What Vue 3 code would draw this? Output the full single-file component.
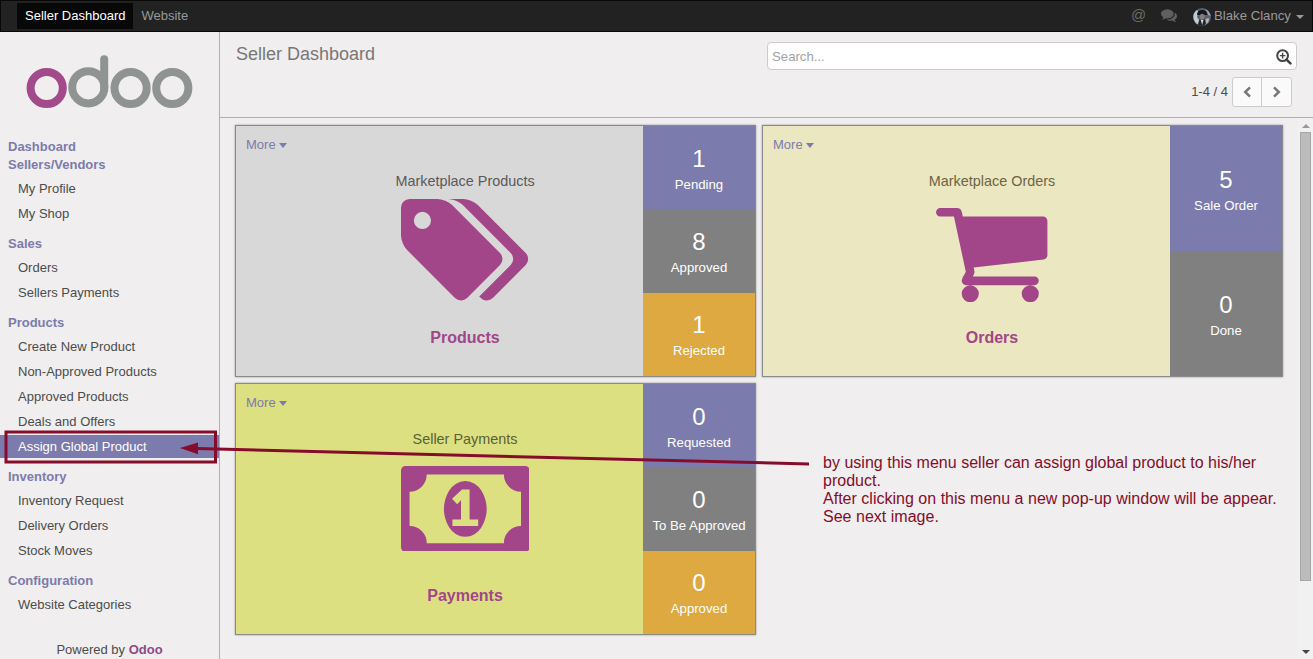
<script setup>
const menu = [
  { title: 'Dashboard', items: [] },
  { title: 'Sellers/Vendors', items: ['My Profile', 'My Shop'] },
  { title: 'Sales', items: ['Orders', 'Sellers Payments'] },
  {
    title: 'Products',
    items: ['Create New Product', 'Non-Approved Products', 'Approved Products', 'Deals and Offers', 'Assign Global Product'],
  },
  { title: 'Inventory', items: ['Inventory Request', 'Delivery Orders', 'Stock Moves'] },
  { title: 'Configuration', items: ['Website Categories'] },
]
const active = 'Assign Global Product'

const icons = {
  tags: {
    box: '0 128 1920 1536', w: 128.6, h: 102.9,
    d: 'M448 448q0-53-37.5-90.5t-90.5-37.5-90.5 37.5-37.5 90.5 37.5 90.5 90.5 37.5 90.5-37.5 37.5-90.5zm1067 576q0 53-37 90l-491 492q-39 37-91 37-53 0-90-37l-715-716q-38-37-64.5-101t-26.5-117v-416q0-52 38-90t90-38h416q53 0 117 26.5t102 64.5l715 714q37 39 37 91zm384 0q0 53-37 90l-491 492q-39 37-91 37-36 0-59-14t-53-45l470-470q37-37 37-90 0-52-37-91l-715-714q-38-38-102-64.5t-117-26.5h224q53 0 117 26.5t102 64.5l715 714q37 39 37 91z',
  },
  cart: {
    box: '64 256 1664 1408', w: 111.4, h: 94.3,
    d: 'M704 1536q0 52-38 90t-90 38-90-38-38-90 38-90 90-38 90 38 38 90zm896 0q0 52-38 90t-90 38-90-38-38-90 38-90 90-38 90 38 38 90zm128-1088v512q0 24-16.5 42.5t-40.5 21.5l-1044 122q13 60 13 70 0 16-24 64h920q26 0 45 19t19 45-19 45-45 19h-1024q-26 0-45-19t-19-45q0-11 8-31.5t16-36 21.5-40 15.5-29.5l-177-823h-204q-26 0-45-19t-19-45 19-45 45-19h256q16 0 28.5 6.5t19.5 15.5 13 24.5 8 26 5.5 29.5 4.5 26h1201q26 0 45 19t19 45z',
  },
  money: {
    box: '0 0 1920 1280', w: 128.6, h: 85.8,
    d: 'M768 896h384v-96h-128v-448h-114l-148 137 77 80q42-37 55-57h2v288h-128v96zm512-256q0 70-21 142t-59.5 134-101.5 101-138 39-138-39-101.5-101-59.5-134-21-142 21-142 59.5-134 101.5-101 138-39 138 39 101.5 101 59.5 134 21 142zm512 256v-512q-106 0-181-75t-75-181h-1152q0 106-75 181t-181 75v512q106 0 181 75t75 181h1152q0-106 75-181t181-75zm128-832v1152q0 26-19 45t-45 19h-1792q-26 0-45-19t-19-45v-1152q0-26 19-45t45-19h1792q26 0 45 19t19 45z',
  },
}

const cards = [
  {
    key: 'products', title: 'Marketplace Products', name: 'Products', icon: icons.tags,
    stats: [['1', 'Pending', 'violet'], ['8', 'Approved', 'gray'], ['1', 'Rejected', 'orange']],
  },
  {
    key: 'orders', title: 'Marketplace Orders', name: 'Orders', icon: icons.cart,
    stats: [['5', 'Sale Order', 'violet'], ['0', 'Done', 'gray']],
  },
  {
    key: 'payments', title: 'Seller Payments', name: 'Payments', icon: icons.money,
    stats: [['0', 'Requested', 'violet'], ['0', 'To Be Approved', 'gray'], ['0', 'Approved', 'orange']],
  },
]
</script>

<template>
  <div class="app">
    <header class="topbar">
      <nav class="tabs">
        <a class="tab current">Seller Dashboard</a>
        <a class="tab">Website</a>
      </nav>
      <div class="tools">
        <span class="at">@</span>
        <svg class="chat" viewBox="0 128 1792 1536">
          <path d="M1408 768q0 139-94 257t-256.5 186.5-353.5 68.5q-86 0-176-16-124 88-278 128-36 9-86 16h-3q-11 0-20.5-8t-11.5-21q-1-3-1-6.5t.5-6.5 2-6l2.5-5 3.5-5.5 4-5 4.5-5 4-4.5q5-6 23-25t26-29.5 22.5-29 25-38.5 20.5-44q-124-72-195-177t-71-224q0-139 94-257t256.5-186.5 353.5-68.5 353.5 68.5 256.5 186.5 94 257zm384 256q0 120-71 224.5t-195 176.5q10 24 20.5 44t25 38.5 22.5 29 26 29.5 23 25q1 1 4 4.5t4.5 5 4 5 3.5 5.5l2.5 5 2 6 .5 6.5-1 6.5q-3 14-13 22t-22 7q-50-7-86-16-154-40-278-128-90 16-176 16-271 0-472-132 58 4 88 4 161 0 309-45t264-129q125-92 192-212t67-254q0-77-23-152 129 71 204 178t75 230z" />
        </svg>
        <svg class="avatar" viewBox="0 0 18 18">
          <circle cx="9" cy="9" r="9" fill="#59626a" />
          <path d="M1 12Q-1 6 4 2L5.5 4 4 9 6 12 5 16.5Q2 15 1 12z" fill="#c4ccd1" />
          <path d="M12 1Q17 3 17.5 8L15 7 14 4z" fill="#9aa3aa" />
          <path d="M12.5 11L16 10 15.5 14 12 17z" fill="#aeb6bb" />
          <path d="M4 7Q4 2 9 2t5.5 5L12 7H6z" fill="#14171d" />
          <ellipse cx="9.2" cy="8.6" rx="2.4" ry="2.8" fill="#847c7d" />
          <path d="M5 17L6.5 11.5 9 13 12 11 13 16Q10 19 5 17z" fill="#20252c" />
          <path d="M7.8 12L10.4 12 9.2 17z" fill="#d5d9dc" />
        </svg>
        <span class="user">Blake Clancy</span>
        <i class="caret"></i>
      </div>
    </header>

    <div class="main">
      <aside class="sidebar">
        <svg class="logo" viewBox="0 0 168 56" fill="none" stroke-width="8">
          <circle cx="20.7" cy="34" r="16.1" stroke="#a34a8b" />
          <g stroke="#8f9392">
            <circle cx="62.3" cy="33.3" r="16.1" />
            <path d="M78.2 33.5V5.3" stroke-linecap="round" />
            <circle cx="104.6" cy="34" r="16.1" />
            <circle cx="146.3" cy="34" r="16.1" />
          </g>
        </svg>
        <nav class="menu">
          <section v-for="g in menu" :key="g.title" class="group" :class="{ filled: g.items.length }">
            <h4>{{ g.title }}</h4>
            <a v-for="i in g.items" :key="i" class="item" :class="{ active: i === active }">{{ i }}</a>
          </section>
        </nav>
        <footer class="powered">Powered by <b>Odoo</b></footer>
      </aside>

      <div class="content">
        <div class="head">
          <h2>Seller Dashboard</h2>
          <div class="controls">
            <div class="search">
              <span>Search...</span>
              <svg viewBox="0 0 16 16" fill="none" stroke="#444">
                <circle cx="6.6" cy="6.6" r="5.4" stroke-width="2" />
                <path d="M10.8 10.8L14.4 14.4" stroke-width="2.6" stroke-linecap="round" />
                <path d="M3.8 6.6H9.4M6.6 3.8V9.4" stroke-width="1.4" />
              </svg>
            </div>
            <div class="pager">
              <span>1-4 / 4</span>
              <div class="buttons">
                <button><svg viewBox="0 0 10 12"><path d="M8 1.3L3.2 6 8 10.7" /></svg></button>
                <button><svg viewBox="0 0 10 12"><path d="M2 1.3L6.8 6 2 10.7" /></svg></button>
              </div>
            </div>
          </div>
        </div>

        <div class="board">
          <div class="cards">
            <article v-for="c in cards" :key="c.key" class="card" :class="c.key">
              <div class="body">
                <a class="more">More<i class="caret"></i></a>
                <div class="summary">
                  <div class="title">{{ c.title }}</div>
                  <div class="picture">
                    <svg :viewBox="c.icon.box" :width="c.icon.w" :height="c.icon.h"><path :d="c.icon.d" fill-rule="evenodd" /></svg>
                  </div>
                  <div class="name">{{ c.name }}</div>
                </div>
              </div>
              <div class="stats">
                <div v-for="s in c.stats" :key="s[1]" class="stat" :class="s[2]">
                  <span class="num">{{ s[0] }}</span>
                  <span class="label">{{ s[1] }}</span>
                </div>
              </div>
            </article>
          </div>
          <div class="scroll">
            <i class="arrow up"></i>
            <div class="thumb"></div>
            <i class="arrow down"></i>
          </div>
        </div>
      </div>
    </div>

    <svg class="marks" viewBox="0 0 1313 659">
      <rect x="6" y="432" width="209.5" height="30" fill="none" stroke="#850d2b" stroke-width="3" />
      <path d="M197 448.5L809 464" stroke="#850d2b" stroke-width="3" />
      <path d="M180 448L198 442.5V454.2z" fill="#850d2b" />
    </svg>
    <p class="note">
      by using this menu seller can assign global product to his/her<br />product.<br />After clicking on this menu a new pop-up window will be appear.<br />See next image.
    </p>
  </div>
</template>

<style>
body { margin: 0; overflow: hidden; }
</style>

<style scoped>
.app { position: relative; box-sizing: border-box; width: 1313px; height: 659px; display: flex; flex-direction: column; overflow: hidden; background: #f0eeee; color: #4c4c4c; font: 13px/18px "Liberation Sans", Arial, sans-serif; }
.topbar { box-sizing: border-box; height: 32px; flex: none; display: flex; justify-content: space-between; background: #222; border: 1px solid #080808; color: #999; }
.tabs { display: flex; padding: 2px 0 0 16px; }
.tab { height: 26px; padding: 0 8px; line-height: 26px; color: #999; }
.tab.current { background: #080808; color: #fff; }
.tools { display: flex; align-items: center; padding-right: 8px; height: 30px; }
.at { font-size: 15px; width: 29px; margin-top: -2px; color: #6a6a6a; }
.chat { width: 16px; height: 14px; fill: #5f5f5f; margin: -2px 16px 0 1px; }
.avatar { width: 18px; height: 18px; margin: 2px 3px 0 0; }
.user { width: 82px; font-size: 13.2px; }
.caret { display: inline-block; border: 4px solid transparent; border-top-color: currentColor; border-bottom: 0; }
.tools .caret { margin-top: 2px; }
.main { flex: 1; display: flex; min-height: 0; }
.sidebar { box-sizing: border-box; width: 220px; display: flex; flex-direction: column; border-right: 1px solid #afafb6; }
.logo { width: 168px; height: 56px; margin: 22px 0 0 26px; display: block; }
.menu { padding-top: 28px; flex: 1; }
.group.filled { margin-bottom: 10px; }
h4 { margin: 0; padding-left: 8px; font-size: 13px; line-height: 18px; font-weight: bold; color: #7c7bad; }
.filled h4 { margin-bottom: 3px; }
.item { display: block; height: 23px; line-height: 23px; margin-bottom: 2px; padding-left: 18px; }
.item.active { background: #7c7bad; color: #fff; }
.powered { text-align: center; }
.powered b { color: #8d4b84; font-weight: bold; }
.content { flex: 1; display: flex; flex-direction: column; min-width: 0; }
.head { box-sizing: border-box; height: 86px; flex: none; display: flex; justify-content: space-between; padding: 10px 16px 0; border-bottom: 1px solid #afafb6; }
h2 { margin: 1px 0 0; font-size: 18px; line-height: 22px; font-weight: normal; color: #777; }
.controls { width: 530px; }
.search { box-sizing: border-box; height: 28px; display: flex; align-items: center; justify-content: space-between; padding: 0 4px; background: #fff; border: 1px solid #ccc; border-radius: 4px; color: #a3a3a3; }
.search span { padding-top: 2px; font-size: 13.2px; }
.search svg { width: 16px; height: 16px; margin-top: 2px; }
.pager { display: flex; justify-content: flex-end; align-items: center; height: 30px; padding: 7px 5px 0 0; }
.pager span { margin-right: 4px; margin-top: -1px; }
.buttons { display: flex; border: 1px solid #ccc; border-radius: 3px; background: #fafafa; }
button { width: 28px; height: 28px; padding: 0; display: flex; align-items: center; justify-content: center; border: 0; background: none; }
button + button { width: 30px; border-left: 1px solid #ccc; }
button svg { width: 10px; height: 12px; fill: none; stroke: #777; stroke-width: 2.5; }
.board { flex: 1; display: flex; justify-content: space-between; min-height: 0; }
.cards { display: grid; grid-template-columns: 521px 521px; grid-auto-rows: 252px; gap: 6px; padding: 7px 0 0 15px; align-content: start; }
.card { box-sizing: border-box; display: flex; border: 1px solid #8a8a8a; box-shadow: 0 0 2px #999; }
.products { background: #d8d8d8; }
.orders { background: #ebe7c1; }
.orders .title { color: #6e6444; }
.payments { background: #dde080; }
.payments .title { color: #596037; }
.body { flex: 1; }
.more { margin: 10px 0 0 10px; color: #7c7bad; display: flex; align-items: center; gap: 3px; }
.more .caret { border-width: 5px 4px 0; }
.summary { display: flex; flex-direction: column; align-items: center; padding-left: 51px; }
.title { margin-top: 18px; font-size: 14.4px; color: #5a5a5a; }
.picture { box-sizing: border-box; height: 103px; margin-top: 9px; display: flex; }
.picture svg { fill: #a24689; display: block; }
.orders .picture, .payments .picture { padding-top: 8.6px; }
.name { margin-top: 26px; font-size: 16px; line-height: 20px; font-weight: bold; color: #a24689; }
.stats { width: 112px; display: flex; flex-direction: column; color: #fff; }
.stat { flex: 1; display: flex; flex-direction: column; align-items: center; justify-content: center; padding-top: 2px; }
.num { font-size: 24px; line-height: 32px; }
.label { font-size: 13.2px; line-height: 20px; }
.violet { background: #7c7bad; }
.gray { background: #808080; }
.orange { background: #dfa941; }
.scroll { width: 15px; display: flex; flex-direction: column; align-items: center; background: #f1f1f1; }
.arrow { border: 4px solid transparent; }
.up { margin-top: 6px; border-top: 0; border-bottom-color: #999; }
.thumb { box-sizing: border-box; width: 11px; height: 449px; margin-top: 4px; background: #bcbcbc; border: 1px solid #a6a6a6; }
.down { margin-top: auto; margin-bottom: 5px; border-bottom: 0; border-top-color: #444; }
.marks { position: absolute; left: 0; top: 0; width: 1313px; height: 659px; }
.note { position: absolute; left: 823px; top: 454px; margin: 0; white-space: nowrap; font-size: 16px; line-height: 18px; letter-spacing: 0.015px; color: #850d2b; }
</style>
